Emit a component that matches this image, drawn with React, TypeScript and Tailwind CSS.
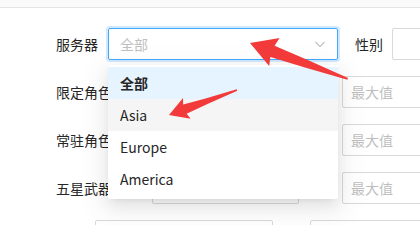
import React from 'react';

const regions = ['全部', 'Asia', 'Europe', 'America'];

const rangeRows = ['限定角色', '常驻角色', '五星武器'];

// red annotation arrows drawn over the page
const Arrows = () => (
  <svg className="pointer-events-none absolute left-0 top-0 z-20" width="420" height="225" viewBox="0 0 420 225">
    <polygon
      points="250,43 279.6,37.9 274.6,45.7 307.7,59.9 348,78 347.4,79.8 304.9,67.5 270.4,56.9 269.2,66.1"
      fill="#f23a3a"
    />
    <polygon
      points="169,115 183,98.1 183.2,104.4 205.5,98.4 236.7,89.3 237.3,90.8 207.5,104 186.6,113.8 190.6,118.7"
      fill="#f23a3a"
    />
  </svg>
);

const App = () => {
  return (
    <div
      className="relative h-[225px] w-[420px] overflow-hidden bg-white text-[14px] text-[#262626]"
      style={{ fontFamily: '"Noto Sans CJK SC", "Noto Sans", sans-serif' }}
    >
      <div className="h-[8px] border-b border-[#e4e4e4] bg-[#fafafa]" />

      <div className="flex flex-col gap-4 pl-[56px] pt-[20px]">
        {/* server row */}
        <div className="flex h-8 items-center">
          <span className="w-[52px] shrink-0 leading-none">服务器</span>
          <div className="relative">
            <div className="flex h-8 w-[230px] items-center justify-between rounded-[2px] border border-[#40a9ff] pl-[11px] pr-[11px] shadow-[0_0_0_2px_rgba(24,144,255,0.2)]">
              <span className="leading-none text-[#bfbfbf]">全部</span>
              <svg width="12" height="12" viewBox="0 0 12 12" className="text-[#bfbfbf]">
                <path d="M1.5 4 L6 8.5 L10.5 4" fill="none" stroke="currentColor" strokeWidth="1.1" />
              </svg>
            </div>
            <div className="absolute left-0 top-[37px] z-10 w-[230px] rounded-[2px] bg-white pb-[4px] pt-[2px] shadow-[0_3px_6px_-4px_rgba(0,0,0,0.12),0_6px_16px_0_rgba(0,0,0,0.08),0_9px_28px_8px_rgba(0,0,0,0.05)]">
              {regions.map((r, i) => (
                <div
                  key={r}
                  className={`flex h-8 items-center px-3 leading-none ${
                    i === 0 ? 'bg-[#e6f4ff] font-semibold' : i === 1 ? 'bg-[#f5f5f5]' : ''
                  }`}
                >
                  {r}
                </div>
              ))}
            </div>
          </div>
          <span className="ml-[17px] w-[37px] shrink-0 leading-none">性别</span>
          <div className="h-8 w-[120px] shrink-0 rounded-[2px] border border-[#d9d9d9]" />
        </div>

        {rangeRows.map((label) => (
          <div key={label} className="flex h-8 items-center">
            <span className="w-[96px] shrink-0 leading-none">{label}</span>
            <div className="h-8 w-[147px] shrink-0 rounded-[2px] border border-[#d9d9d9]" />
            <span className="w-[43px] shrink-0 text-center text-[#bfbfbf]">-</span>
            <div className="flex h-8 w-[120px] shrink-0 items-center rounded-[2px] border border-[#d9d9d9] pl-2">
              <span className="leading-none text-[#bfbfbf]">最大值</span>
            </div>
          </div>
        ))}

        <div className="flex h-8 items-center pl-[39px]">
          <div className="h-8 w-[178px] shrink-0 rounded-[2px] border border-[#d9d9d9]" />
          <div className="ml-[37px] h-8 w-[140px] shrink-0 rounded-[2px] border border-[#d9d9d9]" />
        </div>
      </div>

      <Arrows />
    </div>
  );
};

export default App;
